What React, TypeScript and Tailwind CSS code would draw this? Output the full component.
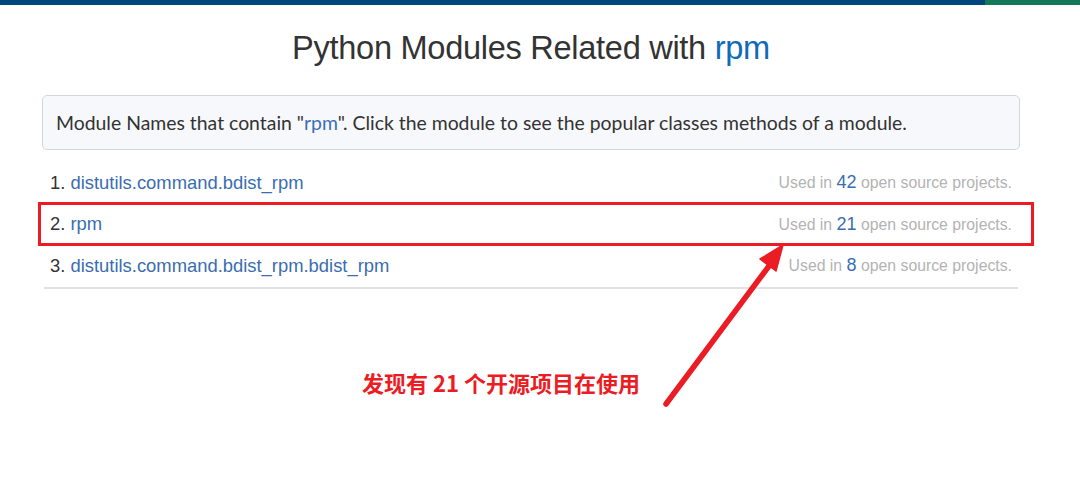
import React from 'react';

type Module = { name: string; count: number };

const modules: Module[] = [
  { name: 'distutils.command.bdist_rpm', count: 42 },
  { name: 'rpm', count: 21 },
  { name: 'distutils.command.bdist_rpm.bdist_rpm', count: 8 },
];

const App: React.FC = () => {
  return (
    <div className="relative w-full h-[485px] bg-white overflow-hidden">
      {/* Top bar */}
      <div className="flex h-[5px]">
        <div className="flex-1 bg-[#00457d]" />
        <div className="w-[95px] bg-[#12795a]" />
      </div>

      <h1
        className="mt-[25px] pr-[18px] text-center text-[32.6px] leading-[36px] text-[#333] tracking-[-0.3px]"
        style={{ fontFamily: '"Liberation Sans", Arial, sans-serif' }}
      >
        Python Modules Related with <span className="text-[#0f6bb7]">rpm</span>
      </h1>

      <div className="px-[42px] mt-[29px] w-[1062px]">
        {/* Info box */}
        <div
          className="h-[55px] flex items-center px-[13px] rounded-[5px] border border-[#d3d6da] bg-[#f7f8fb] text-[19.4px] text-[#333]"
          style={{ fontFamily: 'Lato, "Open Sans", sans-serif' }}
        >
          <span>
            Module Names that contain "<span className="text-[#3a6fb5]">rpm</span>". Click the module to see the popular classes methods of a module.
          </span>
        </div>

        {/* Module list */}
        <ol
          className="mt-[12px] mx-[2px] border-b-2 border-[#dfe2e4]"
          style={{ fontFamily: '"Liberation Sans", Arial, sans-serif' }}
        >
          {modules.map((m, i) => (
            <li key={m.name} className="h-[41.5px] flex items-center justify-between px-[6px]">
              <span className="text-[18.4px] text-[#333]">
                {i + 1}. <span className="text-[#3a6db1]">{m.name}</span>
              </span>
              <span className="text-[15.8px] text-[#b3b3b3]">
                Used in <span className="text-[18px] text-[#3a6db1]">{m.count}</span> open source projects.
              </span>
            </li>
          ))}
        </ol>
      </div>

      {/* Annotation: highlight box */}
      <div className="absolute left-[38px] top-[202px] w-[996px] h-[44px] border-[3px] border-[#ec1c24] pointer-events-none" />

      {/* Annotation: arrow */}
      <svg className="absolute inset-0 pointer-events-none" width="1080" height="485" viewBox="0 0 1080 485">
        <line x1="666" y1="404" x2="772" y2="262" stroke="#ec1c24" strokeWidth="5.5" strokeLinecap="round" />
        <polygon points="783,245 776,271 760,259" fill="#ec1c24" stroke="#ec1c24" strokeWidth="1.5" strokeLinejoin="round" />
      </svg>

      {/* Annotation: caption */}
      <div
        className="absolute left-[362px] top-[369px] text-[22px] leading-[26px] font-bold text-[#ec1c24]"
        style={{ fontFamily: '"Noto Sans CJK SC", "Noto Sans", sans-serif' }}
      >
        发现有 21 个开源项目在使用
      </div>
    </div>
  );
};

export default App;
